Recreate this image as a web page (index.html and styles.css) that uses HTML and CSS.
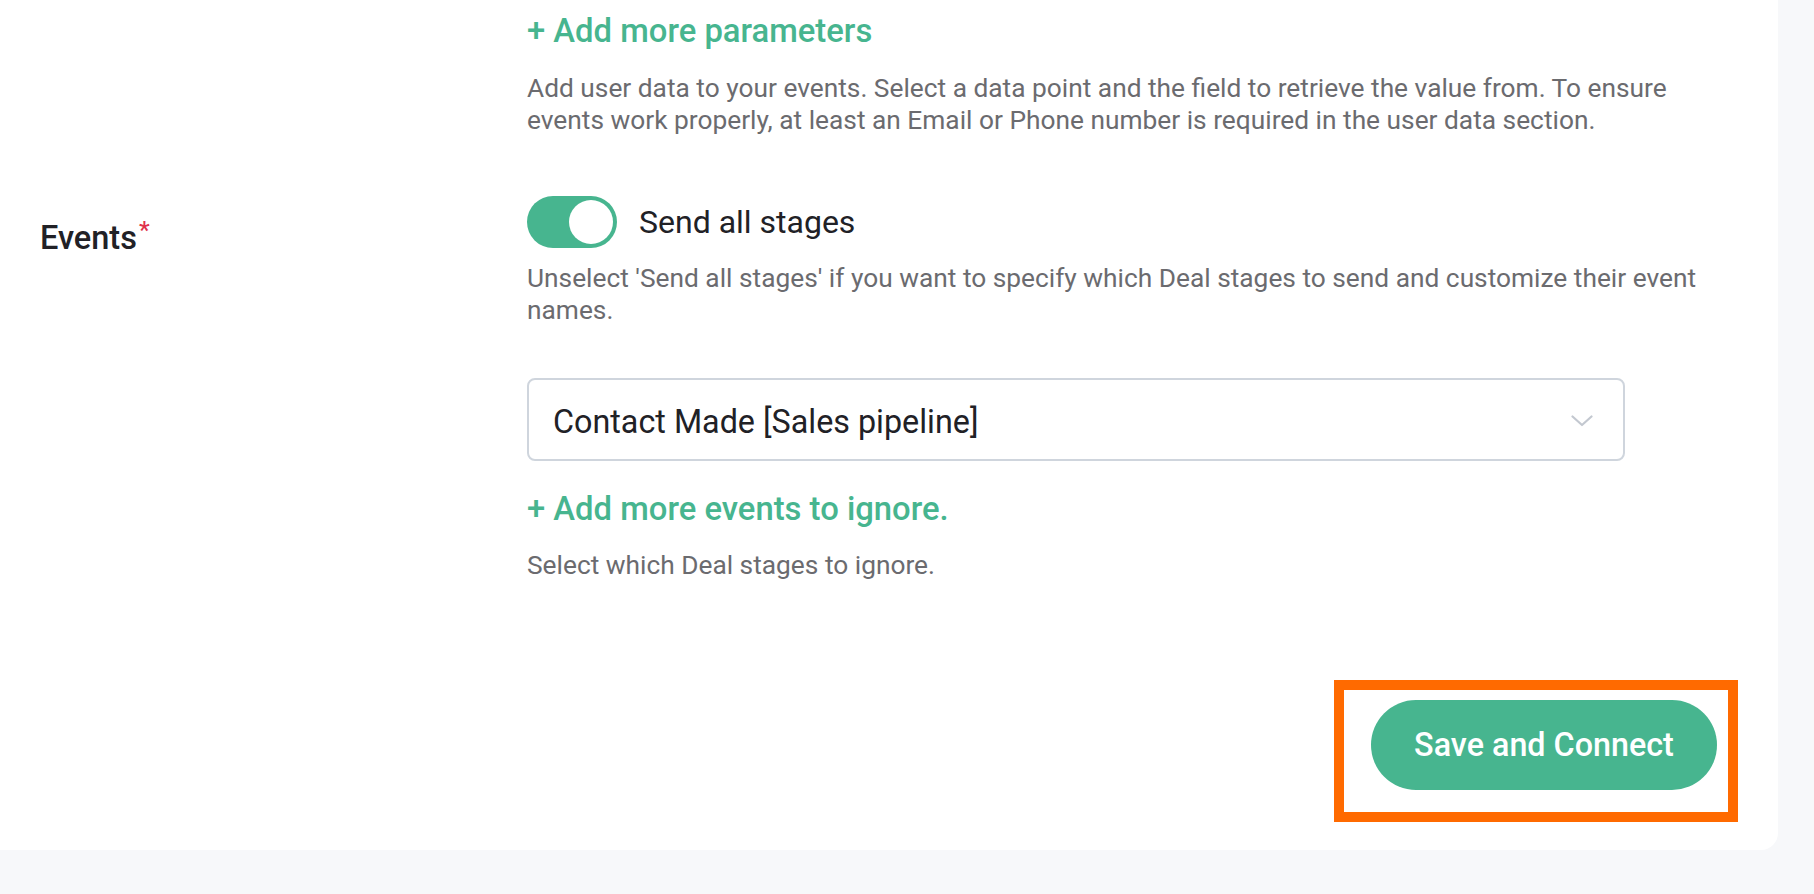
FILE: index.html
```html
<!DOCTYPE html>
<html lang="en">
<head>
<meta charset="utf-8">
<title>Events settings</title>
<link rel="stylesheet" href="styles.css">
</head>
<body>
<div class="page">
  <div class="card">
    <div class="form-row">
      <div class="label-col"></div>
      <div class="field-col">
        <a class="add-link">+ Add more parameters</a>
        <p class="help help-first">Add user data to your events. Select a data point and the field to retrieve the value from. To ensure<br>events work properly, at least an Email or Phone number is required in the user data section.</p>
      </div>
    </div>
    <div class="form-row row-events">
      <div class="label-col">
        <span class="field-label">Events<span class="req">*</span></span>
      </div>
      <div class="field-col">
        <div class="toggle-row">
          <span class="toggle"><span class="knob"></span></span>
          <span class="toggle-text">Send all stages</span>
        </div>
        <p class="help help-toggle">Unselect 'Send all stages' if you want to specify which Deal stages to send and customize their event<br>names.</p>
        <div class="select">
          <span class="select-value">Contact Made [Sales pipeline]</span>
          <svg class="chevron" width="22" height="12" viewBox="0 0 22 12"><path d="M1.5 1.5 L11 10 L20.5 1.5" fill="none" stroke="#c3c8d0" stroke-width="2.2" stroke-linecap="round" stroke-linejoin="round"/></svg>
        </div>
        <a class="add-link add-link-2">+ Add more events to ignore.</a>
        <p class="help help-last">Select which Deal stages to ignore.</p>
      </div>
    </div>
    <div class="footer">
      <div class="highlight">
        <button class="btn-primary">Save and Connect</button>
      </div>
    </div>
  </div>
</div>
</body>
</html>
```
FILE: styles.css
```css
html, body {
  margin: 0;
  padding: 0;
  background: #f7f8fa;
}
body {
  font-family: Roboto, "Noto Sans", "Liberation Sans", sans-serif;
  color: #212126;
  width: 1814px;
  height: 894px;
  overflow: hidden;
}
.page {
  display: flex;
}
.card {
  width: 1778px;
  box-sizing: border-box;
  background: #ffffff;
  border-radius: 0 0 17px 0;
  padding: 11px 40px 28px 40px;
  display: flex;
  flex-direction: column;
}
.form-row {
  display: grid;
  grid-template-columns: 487px 1211px;
}
.field-col {
  display: flex;
  flex-direction: column;
  align-items: flex-start;
}
.add-link {
  color: #47b58f;
  font-size: 32.8px;
  font-weight: 500;
  line-height: 40px;
  cursor: pointer;
}
.help {
  margin: 0;
  color: #6b6b6f;
  font-size: 26.3px;
  line-height: 32px;
}
.help-first {
  margin-top: 21px;
}
.row-events {
  margin-top: 60px;
}
.field-label {
  display: inline-block;
  padding-top: 22px;
  font-size: 32.5px;
  font-weight: 500;
  line-height: 40px;
  color: #212126;
}
.req {
  color: #e0314b;
  font-size: 24px;
  vertical-align: top;
  line-height: 24px;
  margin-left: 2px;
}
.toggle-row {
  display: flex;
  align-items: center;
  gap: 22px;
  height: 52px;
}
.toggle {
  width: 90px;
  height: 52px;
  border-radius: 26px;
  background: #47b58f;
  display: flex;
  align-items: center;
  justify-content: flex-end;
  padding: 0 4px;
  box-sizing: border-box;
}
.knob {
  width: 44px;
  height: 44px;
  border-radius: 50%;
  background: #ffffff;
}
.toggle-text {
  font-size: 32px;
  line-height: 40px;
  color: #212126;
}
.help-toggle {
  margin-top: 14px;
}
.select {
  margin-top: 52px;
  width: 1098px;
  height: 83px;
  box-sizing: border-box;
  border: 2px solid #cfd5dd;
  border-radius: 8px;
  display: flex;
  align-items: flex-start;
  justify-content: space-between;
  padding: 22px 30px 0 24px;
}
.select-value {
  font-size: 32.3px;
  line-height: 40px;
  color: #212126;
}
.chevron {
  margin-top: 13px;
}
.add-link-2 {
  margin-top: 28px;
}
.help-last {
  margin-top: 20px;
}
.footer {
  display: flex;
  justify-content: flex-end;
  margin-top: 99px;
}
.highlight {
  border: 10px solid #ff6a00;
  padding: 10px 11px 22px 27px;
  display: flex;
}
.btn-primary {
  width: 346px;
  height: 90px;
  border: none;
  border-radius: 45px;
  background: #47b58f;
  color: #ffffff;
  font-family: Roboto, "Noto Sans", "Liberation Sans", sans-serif;
  font-size: 32.3px;
  font-weight: 500;
  cursor: pointer;
}
```
